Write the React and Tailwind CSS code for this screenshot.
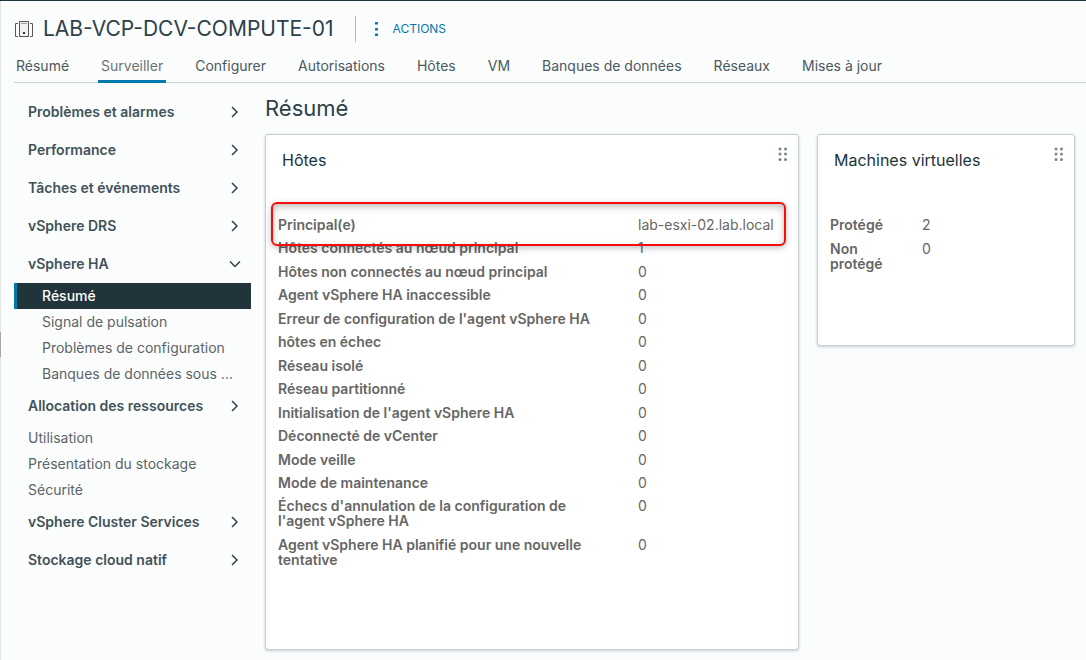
import { useState } from "react";
import clsx from "clsx";

const TABS = [
  "Résumé",
  "Surveiller",
  "Configurer",
  "Autorisations",
  "Hôtes",
  "VM",
  "Banques de données",
  "Réseaux",
  "Mises à jour",
];

const NAV = [
  { label: "Problèmes et alarmes", group: true },
  { label: "Performance", group: true },
  { label: "Tâches et événements", group: true },
  { label: "vSphere DRS", group: true },
  {
    label: "vSphere HA",
    group: true,
    children: [
      "Résumé",
      "Signal de pulsation",
      "Problèmes de configuration",
      "Banques de données sous ...",
    ],
  },
  { label: "Allocation des ressources", group: true },
  { label: "Utilisation" },
  { label: "Présentation du stockage" },
  { label: "Sécurité" },
  { label: "vSphere Cluster Services", group: true },
  { label: "Stockage cloud natif", group: true },
];

const HOSTS = [
  ["Principal(e)", "lab-esxi-02.lab.local"],
  ["Hôtes connectés au nœud principal", "1"],
  ["Hôtes non connectés au nœud principal", "0"],
  ["Agent vSphere HA inaccessible", "0"],
  ["Erreur de configuration de l'agent vSphere HA", "0"],
  ["hôtes en échec", "0"],
  ["Réseau isolé", "0"],
  ["Réseau partitionné", "0"],
  ["Initialisation de l'agent vSphere HA", "0"],
  ["Déconnecté de vCenter", "0"],
  ["Mode veille", "0"],
  ["Mode de maintenance", "0"],
  ["Échecs d'annulation de la configuration de l'agent vSphere HA", "0"],
  ["Agent vSphere HA planifié pour une nouvelle tentative", "0"],
];

function ClusterIcon() {
  return (
    <svg width="20" height="18" viewBox="0 0 20 18" fill="none" stroke="#565656" className="shrink-0" aria-hidden="true">
      <path d="M4 3.5H1.5V16.5H4M16 3.5H18.5V16.5H16" />
      <rect x="5.5" y="1.5" width="9" height="15" fill="#f1f2f2" />
      <path d="M7 3.5H13" stroke="#9a9a9a" />
      <rect x="9" y="12" width="2" height="2" fill="#333" stroke="none" />
    </svg>
  );
}

function Chevron({ open }) {
  return (
    <svg width="14" height="14" viewBox="0 0 14 14" fill="none" stroke="#314351" strokeWidth="1.5" aria-hidden="true">
      <path d={open ? "M2 4.5L7 9.5L12 4.5" : "M4 2L9 7L4 12"} />
    </svg>
  );
}

function DragHandle() {
  return (
    <svg width="10" height="16" viewBox="0 0 10 16" fill="#7b858c" aria-hidden="true">
      {[2, 7, 12.5].map((y) => (
        <g key={y}>
          <circle cx="2" cy={y} r="1.5" />
          <circle cx="7.5" cy={y} r="1.5" />
        </g>
      ))}
    </svg>
  );
}

function Card({ title, className, children }) {
  return (
    <section className={clsx("rounded-[3px] border border-[#c5d0d6] bg-white shadow-[0_1px_3px_rgba(120,140,150,0.4)]", className)}>
      <header className="flex items-start justify-between pt-3 pr-[10px] pl-4">
        <h2 className="pt-[3px] text-base leading-5 text-[#21333b]">{title}</h2>
        <button type="button" aria-label={`Déplacer ${title}`}>
          <DragHandle />
        </button>
      </header>
      {children}
    </section>
  );
}

function Sidebar() {
  const [openGroup, setOpenGroup] = useState("vSphere HA");
  const [selected, setSelected] = useState("Résumé");

  return (
    <nav className="w-[237px] shrink-0 pt-[10px]">
      {NAV.map((item) => {
        if (!item.group) {
          return (
            <a key={item.label} href="#" className="block h-[26px] pl-[14px] text-sm leading-[26px] text-[#5b6467]">
              {item.label}
            </a>
          );
        }
        const open = openGroup === item.label;
        return (
          <div key={item.label}>
            <button
              type="button"
              aria-expanded={open}
              onClick={() => setOpenGroup(open ? null : item.label)}
              className="flex h-[38px] w-full items-center justify-between pr-[9px] pl-[14px] text-sm font-semibold text-[#42525a]"
            >
              {item.label}
              <Chevron open={open} />
            </button>
            {open &&
              item.children?.map((child) => (
                <a
                  key={child}
                  href="#"
                  onClick={() => setSelected(child)}
                  className={clsx(
                    "block h-[26px] border-l-[3px] pl-[25px] text-sm leading-[26px] whitespace-nowrap",
                    selected === child
                      ? "border-[#0079ad] bg-[#21333b] font-medium text-white"
                      : "border-transparent text-[#5b6467]"
                  )}
                >
                  {child}
                </a>
              ))}
          </div>
        );
      })}
    </nav>
  );
}

export default function App() {
  const [tab, setTab] = useState("Surveiller");

  return (
    <div className="flex min-h-screen border-t border-[#21333b] bg-[#fbfdfd] font-['Inter','Noto_Sans',sans-serif]">
      {/* Collapsed panel edge with its grip */}
      <div className="flex w-px shrink-0 items-center bg-[#e3e6e7]">
        <div className="mt-7 h-[25px] w-px bg-[#a6a6a6]" />
      </div>

      <div className="min-w-0 flex-1 pl-[13px]">
        <header className="flex h-[54px] items-center pt-[2px]">
          <ClusterIcon />
          <h1 className="ml-[9px] text-[21px] leading-7 whitespace-nowrap text-[#2d404b]">LAB-VCP-DCV-COMPUTE-01</h1>
          <div className="ml-[21px] h-[26px] w-px bg-[#b5bbbe]" />
          <button type="button" className="ml-[19px] flex items-center gap-[14px] text-xs text-[#0079ad]">
            <svg width="4" height="16" viewBox="0 0 4 16" fill="#0079ad" aria-hidden="true">
              <rect x="0" y="1" width="3" height="2.5" rx="0.5" />
              <rect x="0" y="7" width="3" height="2.5" rx="0.5" />
              <rect x="0" y="12.5" width="3" height="2.5" rx="0.5" />
            </svg>
            ACTIONS
          </button>
        </header>

        <div role="tablist" className="flex h-7 gap-[26px] shadow-[inset_0_-1px_0_#c5d3db]">
          {TABS.map((name) => (
            <button
              key={name}
              type="button"
              role="tab"
              aria-selected={tab === name}
              onClick={() => setTab(name)}
              className={clsx(
                "border-b-[3px] px-[3px] pb-[3px] text-sm leading-5 whitespace-nowrap first:pl-[2px]",
                tab === name ? "border-[#0079ad] text-[#6c7478]" : "border-transparent text-[#4c5860]"
              )}
            >
              {name}
            </button>
          ))}
        </div>

        <div className="flex">
          <Sidebar />

          <main className="min-w-0 flex-1 pt-[11px] pr-[11px] pb-[10px] pl-[14px]">
            <h2 className="text-[22px] leading-7 text-[#2d404b]">Résumé</h2>

            <div className="mt-3 grid grid-cols-3 items-start gap-[18px]">
              <Card title="Hôtes" className="col-span-2 min-h-[516px]">
                <dl className="mt-[47px] flex min-h-[350px] flex-col justify-between px-3 text-sm leading-[15px] text-[#666]">
                  {HOSTS.map(([label, value], i) => (
                    <div key={label} className="relative grid grid-cols-[360px_1fr]">
                      <dt className="pr-10 font-semibold">{label}</dt>
                      <dd>{value}</dd>
                      {i === 0 && (
                        <div className="absolute -top-[15px] right-0 -left-[7px] z-10 h-[44px] rounded-[6px] border-2 border-[#fa0a0a] shadow-[0_2px_6px_rgba(0,0,0,0.25),inset_0_3px_7px_rgba(0,0,0,0.25)]" />
                      )}
                    </div>
                  ))}
                </dl>
              </Card>

              <Card title="Machines virtuelles" className="min-h-[212px]">
                <dl className="mt-[47px] flex flex-col gap-[9px] px-3 text-sm leading-[15px] text-[#666]">
                  <div className="grid grid-cols-[92px_1fr]">
                    <dt className="pr-4 font-semibold">Protégé</dt>
                    <dd>2</dd>
                  </div>
                  <div className="grid grid-cols-[92px_1fr]">
                    <dt className="pr-4 font-semibold">Non protégé</dt>
                    <dd>0</dd>
                  </div>
                </dl>
              </Card>
            </div>
          </main>
        </div>
      </div>
    </div>
  );
}
